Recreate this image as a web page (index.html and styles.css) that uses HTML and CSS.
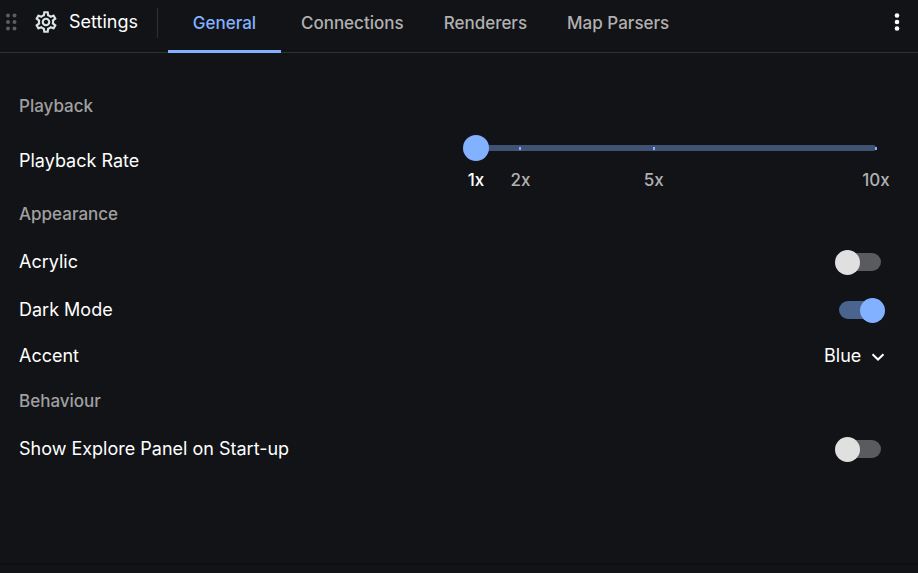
FILE: index.html
```html
<!DOCTYPE html>
<html lang="en">
<head>
<meta charset="utf-8">
<meta name="viewport" content="width=device-width, initial-scale=1">
<title>Settings</title>
<link rel="stylesheet" href="styles.css">
</head>
<body>
<header class="bar">
  <svg class="grip" viewBox="0 0 12 18" aria-hidden="true">
    <circle cx="2" cy="2.5" r="2"/><circle cx="8.5" cy="2.5" r="2"/>
    <circle cx="2" cy="9" r="2"/><circle cx="8.5" cy="9" r="2"/>
    <circle cx="2" cy="15.5" r="2"/><circle cx="8.5" cy="15.5" r="2"/>
  </svg>
  <svg class="gear" viewBox="0 0 24 24" aria-hidden="true">
    <path d="M19.43 12.98c.04-.32.07-.64.07-.98 0-.34-.03-.66-.07-.98l2.110-1.650c.19-.15.24-.42.12-.64l-2-3.460c-.09-.16-.26-.25-.44-.25-.06 0-.12.01-.17.03l-2.490 1c-.52-.4-1.080-.73-1.690-.98l-.38-2.650C14.460 2.180 14.250 2 14 2h-4c-.25 0-.46.18-.49.42l-.38 2.650c-.61.25-1.170.59-1.690.98l-2.490-1c-.06-.02-.12-.03-.18-.03-.17 0-.34.09-.43.25l-2 3.460c-.13.22-.07.49.12.64l2.110 1.650c-.04.32-.07.65-.07.98 0 .33.03.66.07.98l-2.110 1.650c-.19.15-.24.42-.12.64l2 3.460c.09.16.26.25.44.25.06 0 .12-.01.17-.03l2.490-1c.52.4 1.080.73 1.690.98l.38 2.650c.03.24.24.42.49.42h4c.25 0 .46-.18.49-.42l.38-2.650c.61-.25 1.170-.59 1.690-.98l2.490 1c.06.02.12.03.18.03.17 0 .34-.09.43-.25l2-3.460c.12-.22.07-.49-.12-.64l-2.110-1.650zm-1.980-1.710c.04.31.05.52.05.73 0 .21-.02.43-.05.73l-.14 1.130.89.7 1.080.84-.7 1.210-1.270-.51-1.040-.42-.9.68c-.43.32-.84.56-1.250.73l-1.060.43-.16 1.130-.2 1.350h-1.400l-.19-1.350-.16-1.130-1.060-.43c-.43-.18-.83-.41-1.230-.71l-.91-.7-1.060.43-1.270.51-.7-1.210 1.080-.84.89-.7-.14-1.130c-.03-.31-.05-.54-.05-.74s.02-.43.05-.73l.14-1.130-.89-.7-1.080-.84.7-1.210 1.270.51 1.040.42.9-.68c.43-.32.84-.56 1.250-.73l1.060-.43.16-1.130.2-1.350h1.390l.19 1.350.16 1.130 1.060.43c.43.18.83.41 1.230.71l.91.7 1.060-.43 1.270-.51.7 1.210-1.070.85-.89.7.14 1.130zM12 8c-2.210 0-4 1.790-4 4s1.790 4 4 4 4-1.790 4-4-1.790-4-4-4zm0 6c-1.100 0-2-.9-2-2s.9-2 2-2 2 .9 2 2-.9 2-2 2z"/>
  </svg>
  <h1 class="title">Settings</h1>
  <nav class="tabs" aria-label="Settings pages">
    <a class="tab tab-active" href="#general" aria-current="page">General</a>
    <a class="tab" href="#connections">Connections</a>
    <a class="tab" href="#renderers">Renderers</a>
    <a class="tab" href="#map-parsers">Map Parsers</a>
  </nav>
  <button class="more" type="button" aria-label="More options">
    <svg viewBox="0 0 6 18" aria-hidden="true"><circle cx="3" cy="2.5" r="2.3"/><circle cx="3" cy="9" r="2.3"/><circle cx="3" cy="15.5" r="2.3"/></svg>
  </button>
</header>

<main class="content" id="general">
  <h2 class="heading">Playback</h2>
  <div class="row row-slider">
    <label for="rate">Playback Rate</label>
    <div class="slider">
      <div class="track">
        <div class="scale ticks" aria-hidden="true"><i></i><i></i><i></i><i></i></div>
        <input id="rate" class="range" type="range" min="1" max="10" value="1">
      </div>
      <div class="scale marks">
        <span class="mark-active">1x</span><span>2x</span><span>5x</span><span>10x</span>
      </div>
    </div>
  </div>

  <h2 class="heading">Appearance</h2>
  <div class="row">
    <label for="acrylic">Acrylic</label>
    <input id="acrylic" class="switch" type="checkbox" role="switch">
  </div>
  <div class="row">
    <label for="dark">Dark Mode</label>
    <input id="dark" class="switch" type="checkbox" role="switch" checked>
  </div>
  <div class="row row-select">
    <label for="accent">Accent</label>
    <span class="picker">
      <select id="accent" class="select"><option>Blue</option></select>
      <svg class="chevron" viewBox="0 0 14 8" aria-hidden="true"><path d="M1.5 1.2 7 6.5l5.5-5.3"/></svg>
    </span>
  </div>

  <h2 class="heading">Behaviour</h2>
  <div class="row">
    <label for="explore">Show Explore Panel on Start-up</label>
    <input id="explore" class="switch" type="checkbox" role="switch">
  </div>
</main>
<footer class="foot"></footer>
</body>
</html>
```

FILE: styles.css
```css
* {
  box-sizing: border-box;
}

body {
  margin: 0;
  min-height: 100vh;
  display: flex;
  flex-direction: column;
  background: #121316;
  color: #fff;
  font: 400 18px/22px Inter, "Liberation Sans", sans-serif;
}

.bar {
  display: flex;
  align-items: flex-start;
  height: 53px;
  padding-left: 6px;
  border-bottom: 1px solid #2f3033;
}

.grip {
  width: 12px;
  height: 18px;
  margin: 13px 15px 0 0;
  fill: #5c5d60;
}

.gear {
  width: 26px;
  height: 26px;
  margin-top: 9px;
  fill: #dbe4e4;
}

.title {
  margin: 11px 19px 0 10px;
  font-size: 18px;
  font-weight: 400;
}

.tabs {
  display: flex;
  align-self: stretch;
  flex: 1;
}

.tabs::before {
  content: "";
  width: 1px;
  height: 30px;
  margin: 8px 10px 0 0;
  background: #2f3033;
}

.tab {
  height: 53px;
  padding: 12px 20px 0;
  border-bottom: 3px solid transparent;
  color: #b0b0b1;
  font-size: 17px;
  font-weight: 500;
  text-align: center;
  text-decoration: none;
}

.tab-active {
  min-width: 113px;
  border-color: #82b1ff;
  color: #82b1ff;
}

.more {
  width: 42px;
  height: 44px;
  padding: 0;
  border: 0;
  background: none;
}

.more svg {
  display: block;
  width: 6px;
  height: 18px;
  margin: auto;
  fill: #fff;
}

.content {
  flex: 1;
  padding: 30px 33px 0 19px;
}

.heading {
  margin: 0;
  font-size: 17px;
  font-weight: 500;
  line-height: 47px;
  color: #a0a0a1;
}

.row {
  display: flex;
  align-items: center;
  justify-content: space-between;
  height: 48px;
}

.row-slider {
  height: 61px;
}

.row-select {
  height: 44px;
}

.slider {
  width: 400px;
  margin-right: 9px;
  padding-top: 5px;
}

.track {
  position: relative;
  height: 26px;
  padding: 10px 0;
}

.scale {
  display: grid;
  grid-template-columns: 1fr 3fr 5fr 0;
}

.scale > * {
  width: 0;
  display: flex;
  justify-content: center;
}

.ticks {
  height: 6px;
  align-items: center;
  border-radius: 3px;
  background: #3f5274;
}

.ticks i::before {
  content: "";
  flex: none;
  width: 2px;
  height: 3px;
  background: #82b1ff;
}

.range {
  position: absolute;
  inset: 0 -13px;
  margin: 0;
  appearance: none;
  background: none;
}

.range::-webkit-slider-thumb {
  appearance: none;
  width: 26px;
  height: 26px;
  border-radius: 50%;
  background: #82b1ff;
}

.marks {
  margin-top: 8px;
  color: #b0b0b1;
  font-size: 17px;
  font-weight: 500;
}

.marks .mark-active {
  color: #fff;
}

.switch {
  appearance: none;
  display: flex;
  align-items: center;
  width: 50px;
  height: 26px;
  margin: 0;
  border: 4px solid transparent;
  border-radius: 13px;
  background: #5a5b5e padding-box;
}

.switch::before {
  content: "";
  flex: none;
  width: 25px;
  height: 25px;
  margin: 0 -4px;
  border-radius: 50%;
  background: #e0e0e0;
}

.switch:checked {
  justify-content: flex-end;
  background-color: #4a648f;
}

.switch:checked::before {
  background: #82b1ff;
}

.picker {
  position: relative;
  display: flex;
}

.select {
  appearance: none;
  padding: 0 23px 0 0;
  border: 0;
  background: none;
  color: inherit;
  font: inherit;
}

.chevron {
  position: absolute;
  top: 8px;
  right: 0;
  width: 14px;
  height: 8px;
  fill: none;
  stroke: #fff;
  stroke-width: 2;
  pointer-events: none;
}

.foot {
  height: 10px;
  border-top: 2px solid #0e0f11;
}
```
